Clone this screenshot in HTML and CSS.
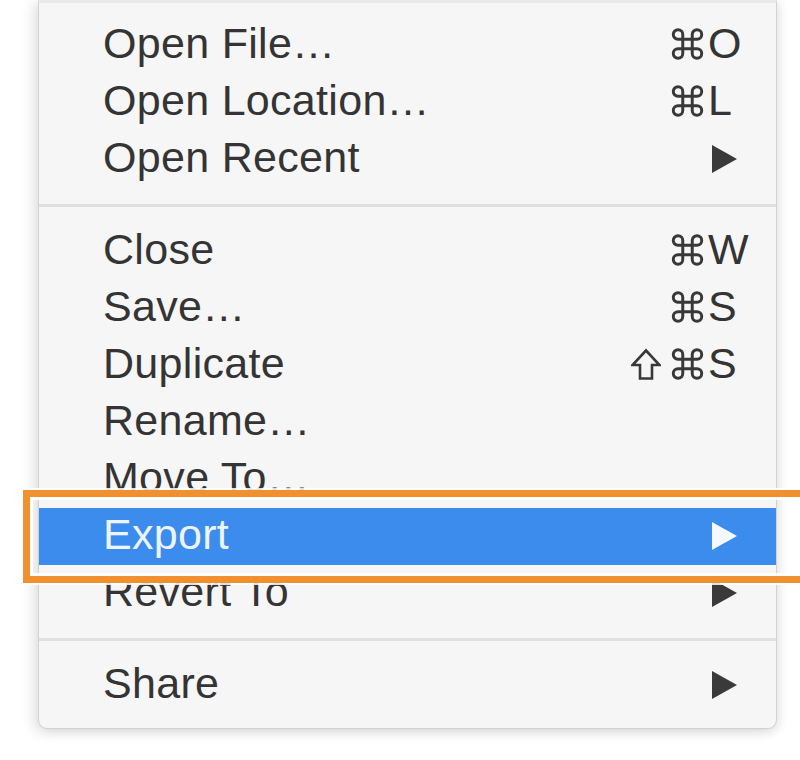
FILE: index.html
```html
<!DOCTYPE html>
<html lang="en">
<head>
<meta charset="utf-8">
<title>File menu</title>
<link rel="stylesheet" href="styles.css">
</head>
<body>
<div class="page">
  <div class="menu">
    <div class="item"><span class="label">Open File…</span><span class="mods"><svg class="cmd" viewBox="2.5 2.5 27 27" aria-label="⌘"><path d="M12 8 V24 A4 4 0 1 1 8 20 H24 A4 4 0 1 1 20 24 V8 A4 4 0 1 1 24 12 H8 A4 4 0 1 1 12 8 Z"/></svg></span><span class="key">O</span></div>
    <div class="item"><span class="label">Open Location…</span><span class="mods"><svg class="cmd" viewBox="2.5 2.5 27 27" aria-label="⌘"><path d="M12 8 V24 A4 4 0 1 1 8 20 H24 A4 4 0 1 1 20 24 V8 A4 4 0 1 1 24 12 H8 A4 4 0 1 1 12 8 Z"/></svg></span><span class="key">L</span></div>
    <div class="item"><span class="label">Open Recent</span><span class="mods"></span><span class="key"><svg class="arrow" viewBox="0 0 25 28"><polygon points="0,0 25,14 0,28"/></svg></span></div>
    <div class="sep"></div>
    <div class="item"><span class="label">Close</span><span class="mods"><svg class="cmd" viewBox="2.5 2.5 27 27" aria-label="⌘"><path d="M12 8 V24 A4 4 0 1 1 8 20 H24 A4 4 0 1 1 20 24 V8 A4 4 0 1 1 24 12 H8 A4 4 0 1 1 12 8 Z"/></svg></span><span class="key">W</span></div>
    <div class="item"><span class="label">Save…</span><span class="mods"><svg class="cmd" viewBox="2.5 2.5 27 27" aria-label="⌘"><path d="M12 8 V24 A4 4 0 1 1 8 20 H24 A4 4 0 1 1 20 24 V8 A4 4 0 1 1 24 12 H8 A4 4 0 1 1 12 8 Z"/></svg></span><span class="key">S</span></div>
    <div class="item"><span class="label">Duplicate</span><span class="mods"><svg class="shift" viewBox="0 0 30 32" aria-label="⇧"><path d="M15 2 L28.5 16.5 H21 V30 H9 V16.5 H1.5 Z"/></svg><svg class="cmd" viewBox="2.5 2.5 27 27" aria-label="⌘"><path d="M12 8 V24 A4 4 0 1 1 8 20 H24 A4 4 0 1 1 20 24 V8 A4 4 0 1 1 24 12 H8 A4 4 0 1 1 12 8 Z"/></svg></span><span class="key">S</span></div>
    <div class="item"><span class="label">Rename…</span><span class="mods"></span><span class="key"></span></div>
    <div class="item"><span class="label">Move To…</span><span class="mods"></span><span class="key"></span></div>
    <div class="item selected"><span class="label">Export</span><span class="mods"></span><span class="key"><svg class="arrow" viewBox="0 0 25 28"><polygon points="0,0 25,14 0,28"/></svg></span></div>
    <div class="item"><span class="label">Revert To</span><span class="mods"></span><span class="key"><svg class="arrow" viewBox="0 0 25 28"><polygon points="0,0 25,14 0,28"/></svg></span></div>
    <div class="sep"></div>
    <div class="item"><span class="label">Share</span><span class="mods"></span><span class="key"><svg class="arrow" viewBox="0 0 25 28"><polygon points="0,0 25,14 0,28"/></svg></span></div>
  </div>
  <div class="callout"></div>
</div>
</body>
</html>
```

FILE: styles.css
```css
html, body {
  margin: 0;
  padding: 0;
  background: #ffffff;
  overflow: hidden;
}

.page {
  position: relative;
  width: 800px;
  height: 760px;
  padding: 0 23px 0 38px;
  box-sizing: border-box;
}

.menu {
  background: #f6f6f6;
  border: 1px solid #d2d2d2;
  border-top: 3px solid #e8e8e8;
  border-radius: 0 0 9px 9px;
  padding: 14px 0 14px 0;
  box-shadow: -4px 3px 14px rgba(0, 0, 0, 0.13), 4px 2px 10px rgba(0, 0, 0, 0.06);
  font-family: "Liberation Sans", Arial, sans-serif;
  font-size: 43px;
  letter-spacing: 0.3px;
  color: #343434;
}

.item {
  display: grid;
  grid-template-columns: 1fr auto 50px;
  align-items: center;
  height: 57px;
  box-sizing: border-box;
  padding: 0 18px 4px 64px;
  line-height: 53px;
  white-space: nowrap;
}

.item.selected {
  background: #3b8ced;
  color: #eef4ff;
}

.mods {
  justify-self: end;
  display: flex;
  align-items: center;
  gap: 9px;
  height: 53px;
  padding-right: 3px;
}

.cmd {
  width: 35px;
  height: 32px;
  margin-top: 1px;
  fill: none;
  stroke: #383838;
  stroke-width: 2.5;
}

.shift {
  width: 30px;
  height: 33px;
  margin-top: 1px;
  fill: none;
  stroke: #383838;
  stroke-width: 2.6;
  stroke-linejoin: miter;
}

.key {
  display: flex;
  align-items: center;
  height: 53px;
  letter-spacing: 0;
}

.arrow {
  width: 25px;
  height: 28px;
  margin-left: 4px;
  margin-top: 2px;
  fill: #3a3a3a;
}

.selected .arrow {
  fill: #f4f8ff;
}

.sep {
  height: 3px;
  margin: 16px 0;
  background: #e0e0e0;
}

.callout {
  position: absolute;
  left: 23px;
  top: 490px;
  width: 790px;
  height: 93px;
  box-sizing: border-box;
  border: 7px solid #f0902f;
  box-shadow: 0 0 0 2px rgba(255, 255, 255, 0.85), inset 0 0 0 3px rgba(255, 255, 255, 0.85);
}
```
